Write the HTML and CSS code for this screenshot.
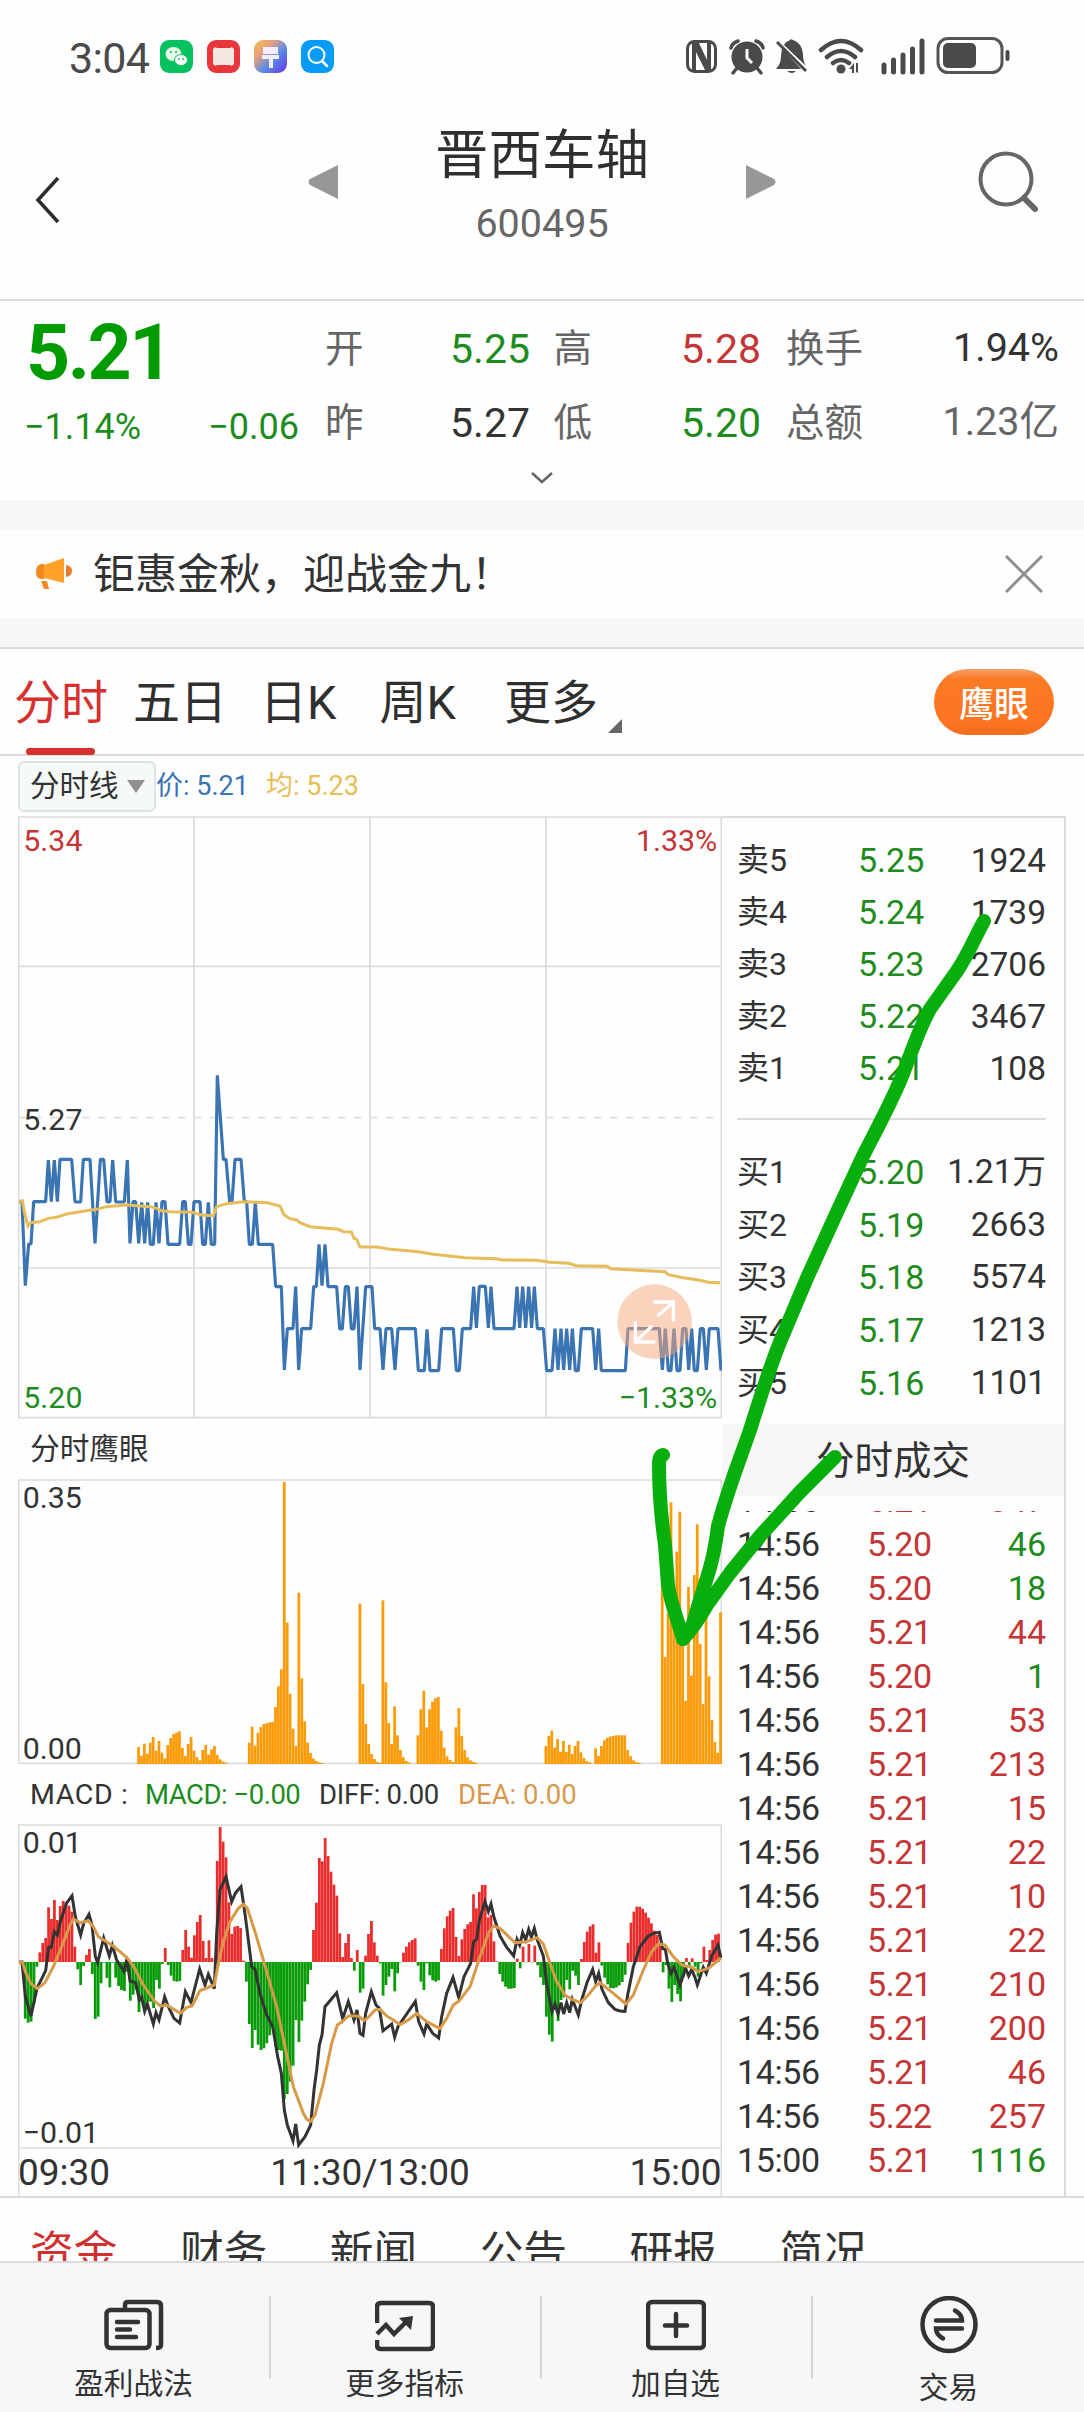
FILE: index.html
```html
<!DOCTYPE html>
<html lang="zh-CN">
<head>
<meta charset="utf-8">
<title>晋西车轴 600495</title>
<link rel="stylesheet" href="styles.css">
</head>
<body>
<div class="page">
  <div class="status">
    <span class="clock">3:04</span>
    <div class="apps">
      <svg class="app" viewBox="0 0 33 33"><rect width="33" height="33" rx="9" fill="#07c160"/><ellipse cx="13.500" cy="14" rx="8" ry="7" fill="#e9fbe9"/><ellipse cx="21" cy="20" rx="6.500" ry="5.500" fill="#fff" stroke="#07c160"/><circle cx="11" cy="12" r="1" fill="#07c160"/><circle cx="16" cy="12" r="1" fill="#07c160"/><circle cx="19" cy="19" r=".9" fill="#07c160"/><circle cx="23" cy="19" r=".9" fill="#07c160"/></svg>
      <svg class="app" viewBox="0 0 33 33"><rect width="33" height="33" rx="9" fill="#e8363a"/><path d="M6 9q2-3 4-1h13q2-2 4 1v15q-2 3-4 1H10q-2 2-4-1z" fill="#f4e6e2"/></svg>
      <svg class="app" viewBox="0 0 33 33"><defs><linearGradient id="brush" x1="0" y1="0" x2="1" y2="1"><stop offset="0" stop-color="#f2c04a"/><stop offset=".3" stop-color="#e8a07a"/><stop offset=".6" stop-color="#5a8be8"/><stop offset="1" stop-color="#6a2fe0"/></linearGradient></defs><rect width="33" height="33" rx="9" fill="url(#brush)"/><path d="M9 7h15v7H9zM8 15h17v4h-6v9h-4v-9H8z" fill="#f3efff"/></svg>
      <svg class="app" viewBox="0 0 33 33"><rect width="33" height="33" rx="9" fill="#089bf5"/><circle cx="15.500" cy="15" r="8" fill="none" stroke="#fff" stroke-width="2"/><path d="M21 21l5 5" stroke="#fff" stroke-width="2.500" stroke-linecap="round"/></svg>
    </div>
    <svg class="signals" viewBox="686 34 326 42">
      <g fill="#4a4a4a">
        <rect x="687.500" y="41.500" width="28" height="30" rx="7" fill="none" stroke="#4a4a4a" stroke-width="3"/>
        <path d="M692 41h6l9 19V41h4v31h-5l-10-20v20h-4z"/>
        <circle cx="747" cy="57" r="15.500"/>
        <path d="M737 68l-4 5M757 68l4 5M731 48q1-5 7-7M763 48q-1-5-7-7" stroke="#4a4a4a" stroke-width="3.500" stroke-linecap="round" fill="none"/>
        <path d="M747 49v9l5 5" stroke="#fff" stroke-width="3" fill="none"/>
        <path d="M776 69q5-5 5-13l1-8 19 21zM784 45q2-4 5-4 1-3 4-1 9 3 10 14 0 8 3 12zM787 71h9q-4 4-9 0z"/>
        <path d="M777 42l29 29" stroke="#4a4a4a" stroke-width="3"/>
        <circle cx="841" cy="69" r="4.500"/>
        <path d="M821 50q20-18 40 0M827 57q14-12 28 0M833 63q8-6 16 0" stroke="#4a4a4a" stroke-width="4.500" fill="none" stroke-linecap="round"/>
        <path d="M849 69l5-6v10h-2v-4zM862 67h-4v6l-2-1v-9h2v4z"/>
        <path d="M884 65v7M893.500 60v12M903 55v17M912.500 49v23M922 41v31" stroke="#4a4a4a" stroke-width="5" stroke-linecap="round"/>
        <rect x="938" y="38.500" width="64" height="34" rx="10" fill="none" stroke="#555" stroke-width="3"/>
        <rect x="943" y="43" width="33" height="25" rx="5"/>
        <rect x="1005.500" y="50" width="4" height="11" rx="2"/>
      </g>
    </svg>
  </div>

  <header class="header">
    <svg class="back" viewBox="0 0 28 48"><path d="M24 2L4 24l20 22" fill="none" stroke="#2c2c2c" stroke-width="3.500"/></svg>
    <svg class="prev" viewBox="0 0 30 34"><path d="M30 0v34L2 20q-3-3 0-6z" fill="#979797"/></svg>
    <div class="name"><h1>晋西车轴</h1><p>600495</p></div>
    <svg class="next" viewBox="0 0 30 34"><path d="M0 0v34l28-14q3-3 0-6z" fill="#979797"/></svg>
    <svg class="search" viewBox="0 0 64 64"><circle cx="28" cy="29" r="25.500" fill="none" stroke="#666" stroke-width="4"/><path d="M46 48l11 11" stroke="#666" stroke-width="6" stroke-linecap="round"/></svg>
  </header>

  <section class="quote">
    <div class="last">
      <b>5.21</b>
      <div class="change"><span>−1.14%</span><span>−0.06</span></div>
    </div>
    <dl class="stats">
      <dt>开</dt><dd class="down">5.25</dd><dt>高</dt><dd class="up">5.28</dd><dt>换手</dt><dd>1.94%</dd>
      <dt>昨</dt><dd>5.27</dd><dt>低</dt><dd class="down">5.20</dd><dt>总额</dt><dd class="muted">1.23亿</dd>
    </dl>
    <svg class="more" viewBox="0 0 22 14"><path d="M1 2l10 9L21 2" fill="none" stroke="#666" stroke-width="2.500"/></svg>
  </section>

  <section class="notice">
    <svg class="horn" viewBox="0 0 38 34"><path d="M9 8L29 1v25L9 21z" fill="#ffa126"/><path d="M9 7H6q-5 1-5 8t5 7h3z" fill="#f08a20"/><path d="M6 24h6l2 8H9z" fill="#f08a20"/><path d="M31 8q6 1 6 6t-6 6z" fill="#e9792b"/></svg>
    <span>钜惠金秋，迎战金九！</span>
    <svg class="close" viewBox="0 0 38 38"><path d="M1 1l36 36M37 1L1 37" stroke="#8e8e8e" stroke-width="3"/></svg>
  </section>

  <nav class="periods">
    <a class="on">分时</a><a>五日</a><a>日K</a><a>周K</a><a>更多</a>
    <svg class="corner" viewBox="0 0 14 14"><path d="M14 0v14H0z" fill="#666"/></svg>
    <button>鹰眼</button>
  </nav>

  <div class="legend">
    <div class="select">分时线<svg viewBox="0 0 18 13"><path d="M0 0h18l-9 13z" fill="#8f8f8f"/></svg></div>
    <span class="price">价: 5.21</span><span class="avg">均: 5.23</span>
  </div>

  <main class="board">
    <div class="charts">
      <svg class="chart-price" viewBox="54 -612 2112 1809">
        <g class="grid"><path d="M54-609H2166M56-612V1194M582-609V1194M1110-609V1194M1638-609V1194M2164-609V1194M54-161H2160M54 744H2160M54 1193H2166"/></g>
        <path class="dash" d="M54 293H2160"/>
        <polyline class="line-price" points="57,545 66,545 76,797 86,672 93,672 101,545 137,545 145,420 154,545 163,420 172,545 180,418 215,418 225,546 242,546 250,418 270,418 285,670 301,418 311,418 321,546 330,546 338,420 347,546 373,546 382,420 390,670 399,545 407,545 416,670 425,547 434,670 443,547 451,673 460,673 468,547 477,670 486,545 495,545 504,673 539,673 548,545 556,545 565,673 573,673 582,545 600,545 608,673 616,673 625,547 634,673 644,673 652,166 670,418 678,418 689,545 696,545 705,418 723,418 733,545 740,545 748,673 757,673 766,547 775,673 818,673 827,800 844,800 853,1050 862,926 879,926 887,800 896,1050 905,926 932,926 941,800 949,800 957,673 966,797 975,673 984,800 1010,800 1019,927 1027,927 1036,800 1045,800 1054,927 1062,927 1071,800 1080,1050 1097,800 1116,800 1124,926 1140,926 1149,1050 1158,926 1175,926 1185,1050 1194,926 1246,926 1255,1052 1273,1052 1281,928 1290,1052 1316,1052 1325,926 1360,926 1369,1052 1378,1052 1387,926 1412,926 1421,800 1429,924 1438,799 1456,799 1465,924 1473,800 1482,926 1542,926 1551,800 1559,924 1568,800 1577,924 1586,800 1595,924 1603,800 1612,926 1630,926 1640,1052 1656,1052 1665,926 1674,1050 1683,926 1691,1050 1700,926 1709,1050 1717,926 1726,1052 1735,1052 1744,926 1778,926 1787,1050 1796,926 1804,1052 1876,1052 1884,926 1978,926 1987,1050 1996,926 2005,1052 2013,1052 2022,926 2031,1052 2040,1052 2048,926 2058,926 2066,1050 2075,926 2083,1052 2092,1052 2101,926 2110,926 2119,1050 2128,926 2154,926 2163,1052"/>
        <polyline class="line-avg" points="57,545 67,542 75,585 84,618 92,608 120,605 145,595 172,591 200,582 240,575 290,568 320,560 380,555 450,560 470,565 485,572 510,575 575,577 605,585 640,587 650,560 680,551 730,545 800,548 840,558 852,584 870,596 890,600 900,608 930,620 1015,628 1030,635 1054,636 1062,655 1070,658 1080,681 1130,681 1165,687 1255,695 1300,703 1395,713 1490,716 1505,720 1610,721 1650,727 1705,730 1730,737 1820,739 1832,746 1995,755 2005,764 2050,773 2100,781 2125,787 2160,788"/>
        <circle cx="1964" cy="905" r="112" fill="#f7a87e" opacity=".52"/>
        <path d="M1960 846h60v58M2018 848l-46 41M1966 966h-60v-62M1908 964l48-46" fill="none" stroke="#fff" stroke-width="10"/>
        <g class="axis">
          <text class="up" x="70" y="-507">5.34</text><text class="up" x="2152" y="-507" text-anchor="end">1.33%</text>
          <text x="70" y="330">5.27</text>
          <text class="down" x="70" y="1163">5.20</text><text class="down" x="2152" y="1163" text-anchor="end">−1.33%</text>
        </g>
      </svg>
      <div class="caption eagle">分时鹰眼</div>
      <svg class="chart-eagle" viewBox="54 177 2112 858">
        <g class="grid"><path d="M54 180H2166M56 180V1030M2164 180V1030M54 1030H2166"/></g>
        <g id="eagle-bars"></g>
        <g class="axis"><text x="68" y="264">0.35</text><text x="68" y="1017">0.00</text></g>
      </svg>
      <div class="caption macd"><span>MACD :</span><span class="down">MACD: −0.00</span><span>DIFF: 0.00</span><span class="dea">DEA: 0.00</span></div>
      <svg class="chart-macd" viewBox="54 72 2112 1116">
        <g class="grid"><path d="M54 75H2166M56 75V1188M2164 75V1188M54 1044H2166"/></g>
        <g id="macd-bars"></g>
        <polyline class="line-diff" points="57,486 66,486 76,590 93,648 111,565 137,512 146,442 154,442 163,395 172,405 181,365 199,310 216,287 226,350 242,405 251,370 267,343 276,375 286,470 293,488 311,414 328,468 337,436 350,480 372,514 381,476 390,543 407,548 418,600 425,592 434,634 442,612 460,672 468,638 477,660 494,590 504,618 522,655 539,669 556,575 573,608 599,507 615,555 625,523 643,566 650,400 660,270 678,230 695,305 707,278 723,260 732,320 740,380 755,500 765,508 780,580 800,645 818,680 833,770 844,820 853,930 862,975 879,1022 887,972 896,1035 915,1010 932,975 942,870 950,810 958,735 966,705 975,620 1010,578 1028,656 1045,605 1062,660 1071,630 1080,700 1089,706 1097,640 1114,575 1128,615 1138,625 1149,692 1175,672 1184,712 1194,680 1246,604 1256,665 1272,702 1280,672 1298,700 1316,714 1325,650 1340,580 1359,532 1376,592 1392,530 1412,490 1421,425 1430,418 1438,360 1455,305 1465,335 1473,312 1482,352 1500,408 1520,442 1541,468 1551,418 1559,435 1568,398 1577,420 1586,388 1594,412 1603,385 1612,420 1630,468 1640,550 1656,635 1665,612 1674,642 1683,608 1691,642 1700,608 1709,638 1717,598 1735,645 1745,600 1762,545 1778,508 1787,545 1796,520 1806,568 1825,608 1845,628 1860,633 1875,634 1884,580 1900,500 1920,440 1945,408 1960,400 1978,397 1988,446 1996,448 2003,490 2013,520 2022,502 2040,555 2057,505 2066,528 2075,508 2084,530 2092,555 2110,502 2119,520 2135,468 2154,435 2163,474"/>
        <polyline class="line-dea" points="57,486 67,486 76,515 92,550 112,566 135,548 160,500 185,440 210,375 220,357 240,368 265,362 280,380 295,410 311,420 340,438 380,472 400,498 430,555 465,605 482,618 500,615 541,640 560,622 576,618 600,572 620,564 643,555 655,490 670,425 690,365 715,325 730,312 742,325 765,395 790,480 830,620 855,740 880,860 910,940 920,958 932,964 945,945 970,850 995,730 1012,675 1030,662 1045,648 1075,648 1092,662 1105,652 1125,630 1140,628 1160,648 1180,660 1200,674 1225,660 1250,640 1280,665 1320,686 1340,655 1360,615 1378,602 1410,560 1440,470 1465,400 1480,378 1500,385 1545,428 1580,425 1612,413 1630,432 1650,490 1670,545 1695,585 1720,600 1742,608 1765,585 1785,560 1800,548 1840,580 1878,612 1900,585 1930,510 1955,455 1975,432 1995,435 2020,470 2045,495 2075,502 2095,515 2125,505 2163,474"/>
        <g class="axis"><text x="68" y="159">0.01</text><text x="68" y="1029">−0.01</text></g>
        <g class="times"><text x="54" y="1155">09:30</text><text x="1110" y="1155" text-anchor="middle">11:30/13:00</text><text x="2165" y="1155" text-anchor="end">15:00</text></g>
      </svg>
    </div>

    <aside class="depth">
      <ul class="book asks">
        <li><span>卖5</span><i>5.25</i><em>1924</em></li>
        <li><span>卖4</span><i>5.24</i><em>1739</em></li>
        <li><span>卖3</span><i>5.23</i><em>2706</em></li>
        <li><span>卖2</span><i>5.22</i><em>3467</em></li>
        <li><span>卖1</span><i>5.21</i><em>108</em></li>
      </ul>
      <ul class="book bids">
        <li><span>买1</span><i>5.20</i><em>1.21万</em></li>
        <li><span>买2</span><i>5.19</i><em>2663</em></li>
        <li><span>买3</span><i>5.18</i><em>5574</em></li>
        <li><span>买4</span><i>5.17</i><em>1213</em></li>
        <li><span>买5</span><i>5.16</i><em>1101</em></li>
      </ul>
      <h2>分时成交</h2>
      <ul class="ticks">
        <li><span>14:56</span><i>5.21</i><em class="up">347</em></li>
        <li><span>14:56</span><i>5.20</i><em class="down">46</em></li>
        <li><span>14:56</span><i>5.20</i><em class="down">18</em></li>
        <li><span>14:56</span><i>5.21</i><em class="up">44</em></li>
        <li><span>14:56</span><i>5.20</i><em class="down">1</em></li>
        <li><span>14:56</span><i>5.21</i><em class="up">53</em></li>
        <li><span>14:56</span><i>5.21</i><em class="up">213</em></li>
        <li><span>14:56</span><i>5.21</i><em class="up">15</em></li>
        <li><span>14:56</span><i>5.21</i><em class="up">22</em></li>
        <li><span>14:56</span><i>5.21</i><em class="up">10</em></li>
        <li><span>14:56</span><i>5.21</i><em class="up">22</em></li>
        <li><span>14:56</span><i>5.21</i><em class="up">210</em></li>
        <li><span>14:56</span><i>5.21</i><em class="up">200</em></li>
        <li><span>14:56</span><i>5.21</i><em class="up">46</em></li>
        <li><span>14:56</span><i>5.22</i><em class="up">257</em></li>
        <li><span>15:00</span><i>5.21</i><em class="down">1116</em></li>
      </ul>
    </aside>
  </main>

  <nav class="info"><a class="on">资金</a><a>财务</a><a>新闻</a><a>公告</a><a>研报</a><a>简况</a></nav>

  <footer class="actions">
    <a><svg viewBox="0 0 60 60"><g fill="none" stroke="#333" stroke-width="4.500"><rect x="2.500" y="14" width="43" height="38" rx="4"/><path d="M21 12V9q0-3 3-3h29q4 0 4 4v39q0 3-5 3"/><path d="M13 26h21M13 33.500h13M13 41h19" stroke-linecap="round"/></g></svg>盈利战法</a>
    <a><svg viewBox="0 0 60 60"><g fill="none" stroke="#333" stroke-width="4.500"><path d="M2 27V11q0-4 4-4h48q4 0 4 4v38q0 4-4 4H6q-4 0-4-4v-5"/><path d="M2 38l9-9 8 9 13-13"/></g><path d="M24 22l14-2-2 14z" fill="#333"/></svg>更多指标</a>
    <a><svg viewBox="0 0 60 60"><g fill="none" stroke="#333" stroke-width="4.500"><rect x="2" y="6" width="56" height="46" rx="4"/><path d="M30 18v22M19 29.500h22" stroke-linecap="round"/></g></svg>加自选</a>
    <a class="trade"><svg viewBox="0 0 60 60"><g fill="none" stroke="#333" stroke-width="4.500"><circle cx="30" cy="28.500" r="26.500"/><path d="M17 24.500h26q0-6-7-10M43 32.500H17q0 6 7 10" stroke-linecap="round"/></g></svg>交易</a>
  </footer>

  <svg class="scribble" viewBox="0 0 1084 2412">
    <path d="M984 921C977 933 968 955 957 971L930 1009C920 1027 915 1043 907 1063C897 1093 877 1128 863 1156L837 1212L807 1278L780 1342C768 1372 757 1408 750 1430C742 1454 730 1482 718 1526C713 1566 705 1582 699 1603C694 1619 694 1627 683 1639C677 1618 671 1604 668 1585L665 1545C661 1517 659 1492 659 1464Q659 1456 663 1455"/>
    <path d="M835 1457L800 1492L760 1536L730 1573L707 1605Q696 1625 683 1639"/>
  </svg>
</div>
<script src="app.js"></script>
</body>
</html>
```
FILE: styles.css
```css
* { box-sizing: border-box; }
body { margin: 0; background: #fefefe; color: #333; font-family: Roboto, "Noto Sans CJK SC", sans-serif; }
h1, h2, p, ul, dl, dd { margin: 0; padding: 0; font-weight: 400; }
ul { list-style: none; }
i, em { font-style: normal; }
svg { display: block; flex: none; }
.up { color: #c53535; fill: #c53535; }
.down { color: #1d8c1d; fill: #1d8c1d; }
.page { position: relative; width: 1084px; height: 2412px; overflow: hidden; display: flex; flex-direction: column; }

.status { height: 112px; display: flex; padding: 34px 72px 0 69px; align-items: flex-start; }
.clock { width: 91px; font-size: 43px; line-height: 48px; letter-spacing: -.7px; color: #4a4a4a; }
.apps { display: flex; gap: 14px; margin-top: 6px; }
.app { width: 33px; height: 33px; }
.signals { width: 326px; height: 42px; margin-left: auto; }

.header { height: 187px; display: flex; align-items: flex-start; padding-left: 34px; }
.back { width: 28px; height: 48px; margin-top: 64px; }
.prev { width: 30px; height: 34px; margin: 53px 0 0 246px; }
.name { width: 408px; text-align: center; }
.name h1 { margin-top: 12px; font-size: 53.500px; line-height: 64px; color: #2f2f2f; }
.name p { margin-top: 12px; font-size: 39.500px; line-height: 48px; color: #666; }
.next { width: 30px; height: 34px; margin-top: 53px; }
.search { width: 64px; height: 64px; margin: 38px 0 0 202px; }

.quote { height: 201px; border-top: 2px solid #dcdcdc; display: grid; grid-template-columns: 325px 1fr; grid-template-rows: 170px 1fr; }
.last { padding: 13px 26px 0; color: #009b00; }
.last b { display: block; font-size: 77px; line-height: 78px; letter-spacing: -2.500px; }
.change { display: flex; justify-content: space-between; margin: 13px 0 0 -2px; font-size: 36px; line-height: 44px; color: #1d8c1d; }
.stats { display: grid; grid-template-columns: 36px 169px 62px 169px 102px 196px; grid-template-rows: 74px 74px; align-items: center; padding-top: 11px; font-size: 41px; line-height: 48px; }
.stats dt { color: #666; font-size: 38.500px; text-align: right; }
.stats dd { text-align: right; }
.stats .muted { color: #666; }
.stats dd:nth-of-type(3n) { font-size: 39.500px; margin-top: -2px; }
.more { grid-column: 1 / 3; justify-self: center; width: 22px; height: 14px; }

.notice { height: 147px; border-top: 30px solid #f7f7f7; border-bottom: 29px solid #f7f7f7; display: flex; align-items: center; padding: 0 41px 0 35px; }
.horn { width: 38px; height: 34px; }
.notice span { margin: 2px 0 0 20px; font-size: 42px; line-height: 60px; }
.close { width: 38px; height: 38px; margin-left: auto; }

.periods { height: 109px; border-top: 2px solid #dcdcdc; border-bottom: 2px solid #dcdcdc; display: flex; padding-left: 14px; font-size: 47px; line-height: 66px; color: #2f2f2f; }
.periods a { padding-top: 21px; height: 107px; flex: none; }
.periods a:nth-child(1) { margin-right: 25px; }
.periods a:nth-child(2) { margin-right: 33px; }
.periods a:nth-child(3) { margin-right: 43px; }
.periods a:nth-child(4) { margin-right: 48px; }
.periods a:nth-child(5) { margin-right: 10px; }
.periods .on { position: relative; color: #d8302f; }
.periods .on::after { content: ""; position: absolute; left: 12px; bottom: 1px; width: 69px; height: 7px; border-radius: 4px; background: #d8302f; }
.corner { width: 14px; height: 14px; margin-top: 70px; }
.periods button { margin: 20px 30px 0 auto; width: 120px; height: 66px; border: 0; border-radius: 33px; background: linear-gradient(#f6a068 0, #fb7a22 16%, #fd7423 80%, #f06c1e); color: #fff; font: 500 35px/64px "Noto Sans CJK SC", sans-serif; padding: 0; }

.legend { height: 60px; display: flex; padding: 5px 0 0 18px; font-size: 27px; line-height: 51px; }
.select { width: 138px; height: 51px; border: 2px solid #dde3e3; border-radius: 6px; background: #f5f9f8; display: flex; align-items: center; padding-left: 10px; font-size: 29.500px; gap: 8px; }
.select svg { width: 18px; height: 13px; }
.price { width: 110px; color: #3a74b4; }
.avg { color: #e9bd57; }

.board { height: 1380px; display: flex; padding-left: 18px; }
.charts { width: 704px; }
.charts text { font-size: 91px; fill: #333; }
.charts text.up { fill: #c53535; }
.charts text.down { fill: #1d8c1d; }
.charts .times text { font-size: 111px; }
.chart-price { width: 704px; height: 603px; }
.chart-eagle { width: 704px; height: 286px; }
.chart-macd { width: 704px; height: 372px; }
.grid path { fill: none; stroke: #dcdcdc; stroke-width: 5; }
.dash { stroke: #dcdcdc; stroke-width: 5; stroke-dasharray: 22 26; }
polyline { fill: none; stroke-linejoin: miter; }
.line-price { stroke: #3b74b3; stroke-width: 9.500; stroke-linejoin: bevel; }
.line-avg { stroke: #e6bd5a; stroke-width: 9; }
.line-diff { stroke: #333; stroke-width: 9; }
.line-dea { stroke: #d79a48; stroke-width: 9; stroke-linejoin: round; }
.caption { padding-left: 12px; }
.eagle { height: 60px; font-size: 29.700px; line-height: 60px; }
.macd { height: 59px; font-size: 27.500px; line-height: 60px; display: flex; }
.macd span:nth-child(1) { width: 115px; font-size: 28.500px; letter-spacing: .6px; }
.macd span:nth-child(2) { width: 174px; letter-spacing: -.5px; }
.macd span:nth-child(3) { width: 139px; letter-spacing: -.3px; }
.macd .dea { color: #d8984c; }

.depth { width: 344px; border-top: 2px solid #dcdcdc; border-right: 2px solid #dcdcdc; }
.book { font-size: 34px; }
.book li, .ticks li { display: grid; grid-template-columns: 121px 82px 1fr; padding: 0 18px 0 15px; }
.book i { color: #1d8c1d; }
.book span { font-size: 32px; }
.book em, .ticks em { text-align: right; }
.book em { font-size: 33.500px; }
.asks { padding-top: 16px; height: 300px; }
.asks li { height: 52px; line-height: 53px; }
.bids { height: 306px; padding-top: 27px; background: linear-gradient(#dcdcdc, #dcdcdc) 15px 0 / 309px 2px no-repeat; }
.bids li { height: 52.700px; line-height: 54px; }
.depth h2 { height: 72px; background: #f7f7f7; font-size: 38.500px; line-height: 73px; text-align: center; }
.ticks { height: 671px; margin-top: 15px; overflow: hidden; font-size: 34px; }
.ticks li { height: 44px; line-height: 44px; grid-template-columns: 130px 72px 1fr; }
.ticks span { letter-spacing: -.4px; }
.ticks i { letter-spacing: -.4px; }
.ticks li:first-child { margin-top: -33px; }
.ticks i { color: #c53535; }

.info { height: 65px; overflow: hidden; border-top: 2px solid #dcdcdc; display: flex; gap: 62.500px; padding: 21px 0 0 30px; font-size: 43.700px; line-height: 66px; }
.info a { flex: none; }
.info .on { color: #d03030; }

.actions { flex: 1; border-top: 2px solid #dadada; background: #f6f7f9; display: grid; grid-template-columns: repeat(4, 1fr); }
.actions a { display: flex; flex-direction: column; align-items: center; padding-top: 33px; margin-left: -4px; font-size: 29.700px; line-height: 46px; background: linear-gradient(#d6d6d8, #d6d6d8) 100% 33px / 2px 83px no-repeat; }
.actions a:last-child { background: none; margin-left: 0; }
.actions svg { width: 60px; height: 60px; margin-bottom: 5px; }
.actions .trade svg { margin-bottom: 9px; }

.scribble { position: absolute; left: 0; top: 0; width: 1084px; height: 2412px; pointer-events: none; }
.scribble path { fill: none; stroke: #08af0c; stroke-width: 14; stroke-linecap: round; stroke-linejoin: round; }
```
FILE: app.js
```js
// Bar charts: each run is [x of the first bar, tops of consecutive one-minute bars].
const STEP = 8.75;

function drawBars(id, base, runs, color) {
  const group = document.getElementById(id);
  for (const [start, tops] of runs) {
    tops.forEach((top, i) => {
      const bar = document.createElementNS("http://www.w3.org/2000/svg", "rect");
      bar.setAttribute("x", start + i * STEP - 4.4);
      bar.setAttribute("y", Math.min(top, base));
      bar.setAttribute("width", 8.3);
      bar.setAttribute("height", Math.abs(base - top));
      bar.setAttribute("fill", color(top));
      group.appendChild(bar);
    });
  }
}

drawBars("eagle-bars", 1032, [
  [416, [981,1007,971,1001,968,951,992,963,998,1015,975,954,942,938,934,984,1008,972,951,992,1011,1021,990,975,1004,988,978,1005,1018,1025,1028]],
  [748, [968,920,977,938,921,912,909,907,906,861,799,748,186,608,821,926,978,518,775,904,968,999,1016,1023,1027,1029]],
  [1080, [551,792,912,972,1002,1017,1026,1029]],
  [1149, [541,787,909,972,859,946,990,1012,1023,1028]],
  [1254, [946,868,812,922,868,845,835,831,932,983,1009,1020,1026]],
  [1368, [922,864,948,990,1012,1021,1026,1029]],
  [1638, [978,948,932,983,957,995,963,996,974,1002,978,963,997,1014,1023,1027]],
  [1787, [985,1008,978,961,954,950,948,946,946,946,946,990,1009,1021,1026,1029]],
  [1987, [500,711,580,247,500,395,275,650,843,501,767,465,313,672,852,560,769,900,966,998,577]]
], () => "#fb9b08");

drawBars("macd-bars", 486, [
  [76, [656,668,665,610,500,457,429,414,322,357,300,360,318,303,308,317,335,440,508,555,498,465,447,522,657,650,550,488,534,562,488,533,558,570,573,515,602,584,568,636,595,629,605,605,624,540,566,492,444,495,527,543,545,543,450,390,440,473,406,366,345,423,474,421,474,484]],
  [652, [183,81,125,172,307,402,380,378,384,482,545,672,744,690,734,750,745,730,706,680,740,750,752,897,882,845,797,660,726,662,605,553,510,390,308,174,184,114,168,215,254,287,400,471,429,402,474,512,450,578,566]],
  [1097, [467,402,363,427,467,490,587,555,530,507,574,520,487,458,440,427,420,415,497,545,570,490,526,541,545,541,447,385,349,332,324,411,468,418,387,373,366,283,325,276,255,255,352,345,424,484,522,545,560,566,566,564,476,505,440,487,432,487,437,496,532,555,650,704,725,630,663,600,592,540,568,512,527,555,477,426,395,379,373,458,427,497,533,553,564,565,562,556,546,524,429,368,335,320,320,326,338,353,370,392,405,432,517,495,566,606,555,582,604,530,474,500,475,500,530,490,440,480,450,420,404,401]]
], top => top < 486 ? "#ea2d2c" : "#079b07");
```
